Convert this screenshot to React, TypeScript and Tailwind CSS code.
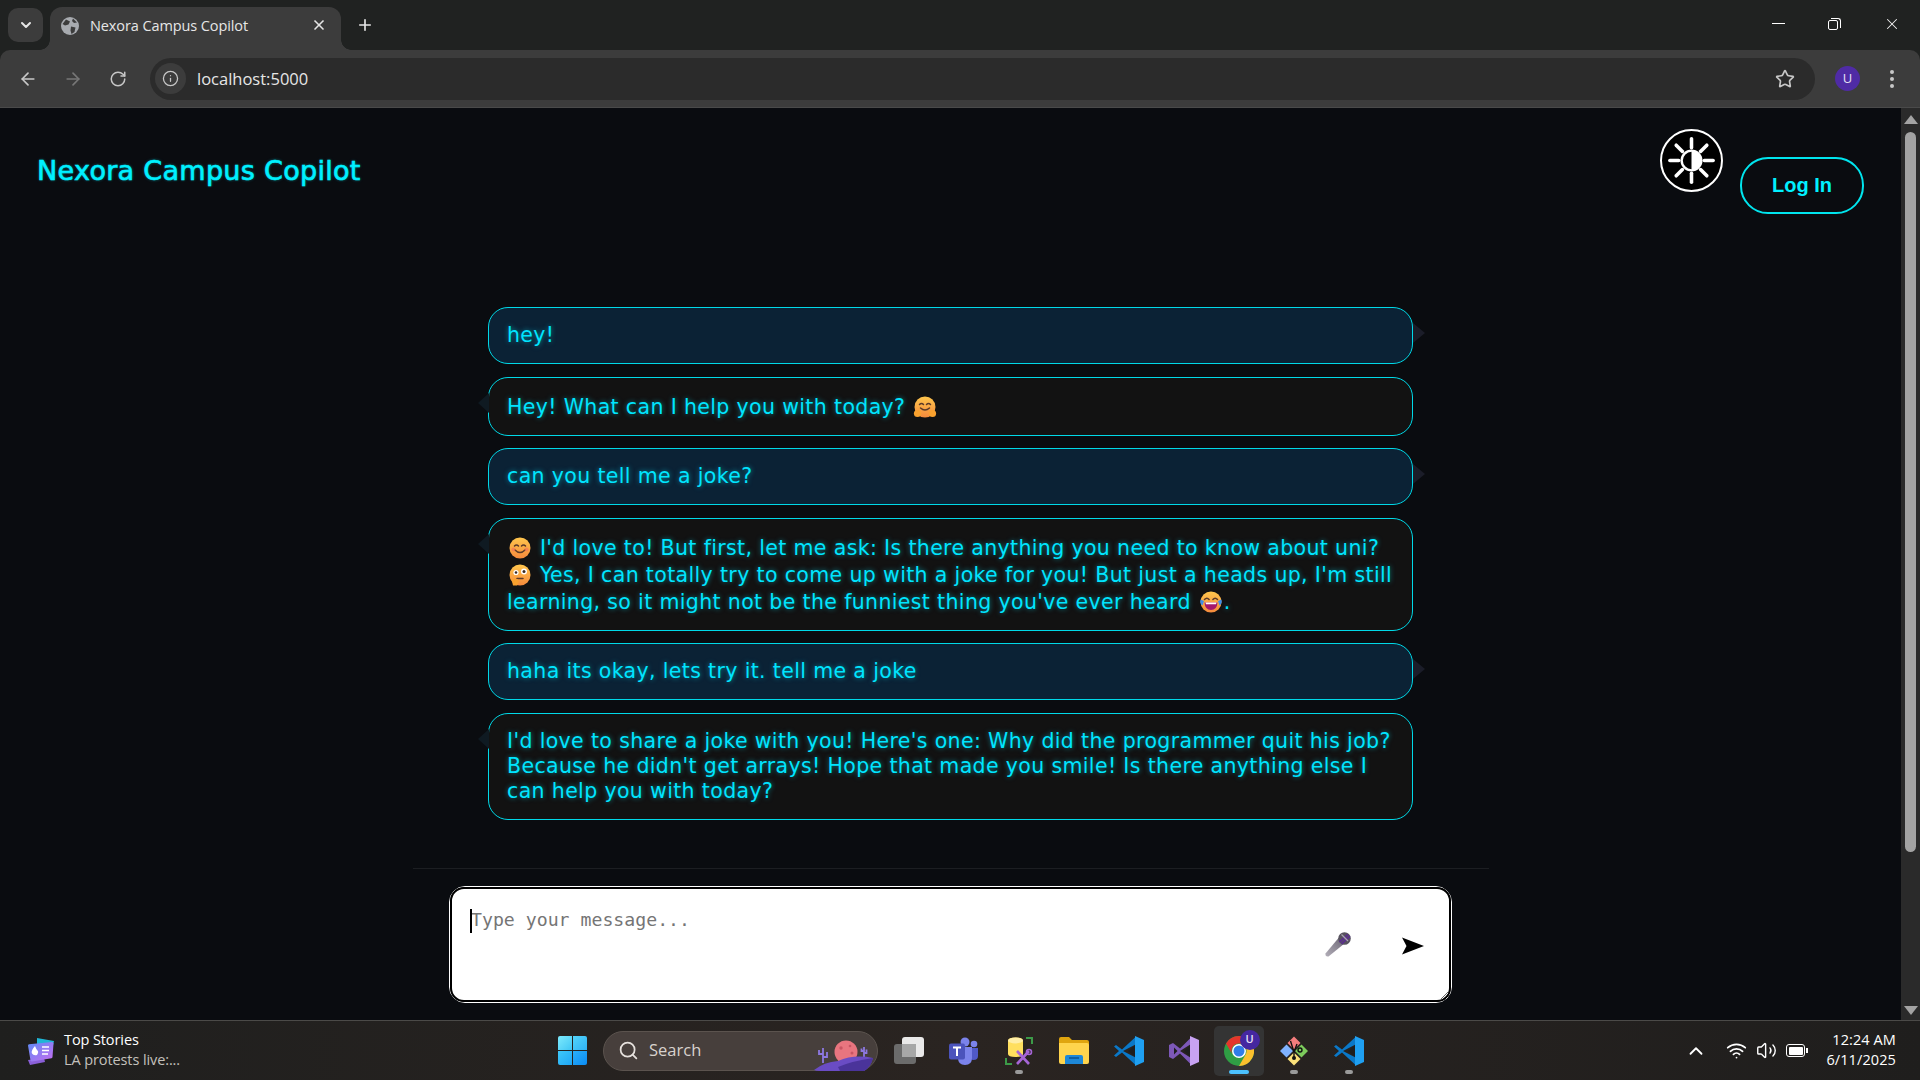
import { ArrowLeft, ArrowRight, ChevronDown, ChevronUp, Info, Plus, RotateCw, Search, Star, Volume2, Wifi, X } from 'lucide-react';

const chatFont = "font-['DejaVu_Sans',sans-serif] text-[20.5px] tracking-[0.36px] text-[#00e5ff] [text-shadow:0_0_5px_rgba(0,229,255,0.55)]";

function Tail({ side }: { side: 'left' | 'right' }) {
  if (side === 'left') {
    return <span className="absolute left-[-11px] top-[15px] h-0 w-0 border-y-[10px] border-r-[11px] border-y-transparent border-r-[#0f1a22]" />;
  }
  return <span className="absolute right-[-13px] top-[15px] h-0 w-0 border-y-[10px] border-l-[12px] border-y-transparent border-l-[#1b1d29]" />;
}

function Emoji({ kind }: { kind: 'hug' | 'smile' | 'think' | 'joy' }) {
  return (
    <svg viewBox="0 0 24 24" className="mx-[1px] inline-block h-[24px] w-[24px] align-[-5px]">
      <defs>
        <linearGradient id={`face-${kind}`} x1="0" y1="0" x2="0" y2="1">
          <stop offset="0" stopColor="#ffc64d" />
          <stop offset="1" stopColor="#f58a3c" />
        </linearGradient>
      </defs>
      <circle cx="12" cy="12" r="10.5" fill={`url(#face-${kind})`} />
      {kind === 'hug' && (
        <>
          <path d="M6.5 9.5q2-2.2 4 0M13.5 9.5q2-2.2 4 0" fill="none" stroke="#5b3a29" strokeWidth="1.5" strokeLinecap="round" />
          <path d="M7.5 13q4.5 4 9 0" fill="none" stroke="#5b3a29" strokeWidth="1.5" strokeLinecap="round" />
          <circle cx="4.5" cy="18.5" r="3.6" fill="#f9a12e" />
          <circle cx="19.5" cy="18.5" r="3.6" fill="#f9a12e" />
        </>
      )}
      {kind === 'smile' && (
        <>
          <path d="M6.5 10q2-2.2 4 0M13.5 10q2-2.2 4 0" fill="none" stroke="#5b3a29" strokeWidth="1.5" strokeLinecap="round" />
          <path d="M7 14q5 5 10 0" fill="none" stroke="#5b3a29" strokeWidth="1.6" strokeLinecap="round" />
          <circle cx="5.5" cy="13.5" r="2" fill="#f2705a" opacity=".6" />
          <circle cx="18.5" cy="13.5" r="2" fill="#f2705a" opacity=".6" />
        </>
      )}
      {kind === 'think' && (
        <>
          <circle cx="8" cy="9.5" r="2.6" fill="#fff" />
          <circle cx="16" cy="8.5" r="3" fill="#fff" />
          <circle cx="8" cy="9.5" r="1.3" fill="#3a2a22" />
          <circle cx="16" cy="8.5" r="1.5" fill="#3a2a22" />
          <path d="M9 15.5h6" stroke="#5b3a29" strokeWidth="1.5" strokeLinecap="round" />
          <path d="M3.5 16h6l1.5 2.5-2 4h-4z" fill="#f9a12e" />
        </>
      )}
      {kind === 'joy' && (
        <>
          <path d="M5.5 9.5q2.4-2.6 4.6 0M13.9 9.5q2.2-2.6 4.6 0" fill="none" stroke="#5b3a29" strokeWidth="1.5" strokeLinecap="round" />
          <path d="M5.5 12.5h13q-.5 7.5-6.5 7.5t-6.5-7.5z" fill="#a5186c" />
          <path d="M6.5 12.5h11l-.5 1.8H7z" fill="#fff" />
          <path d="M1.5 9.5l3.5 1.5-1.5 4.5q-3-2-2-6zM22.5 9.5L19 11l1.5 4.5q3-2 2-6z" fill="#3f8ee8" />
        </>
      )}
    </svg>
  );
}

function Bubble({ from, tall, children }: { from: 'user' | 'bot'; tall?: boolean; children: React.ReactNode }) {
  return (
    <div
      className={`relative rounded-[20px] border border-[#00d9e8] px-[18px] ${chatFont} ${tall ? 'pb-[14px] pt-[16px] leading-[27px]' : 'py-[15px] leading-[25px]'} ${
        from === 'user' ? 'bg-[#0b2235]' : 'bg-[#121212]'
      }`}
    >
      <Tail side={from === 'user' ? 'right' : 'left'} />
      {children}
    </div>
  );
}

function SunIcon() {
  const rays = [0, 45, 90, 135, 180, 225, 270, 315];
  return (
    <svg viewBox="-30 -30 60 60" className="h-full w-full">
      {rays.map((a) => (
        <line key={a} x1="13" y1="0" x2="22" y2="0" stroke="#fff" strokeWidth="3.6" strokeLinecap="round" transform={`rotate(${a})`} />
      ))}
      <circle r="10" fill="#000" stroke="#fff" strokeWidth="2.4" />
      <path d="M0-10.5a10.5 10.5 0 0 1 0 21z" fill="#fff" />
    </svg>
  );
}

function TabStrip() {
  return (
    <div className="flex h-[50px] shrink-0 items-end bg-[#202221] font-['Open_Sans',sans-serif] text-[#e6e6e6]">
      <div className="mb-[8px] ml-[8px] flex h-[34px] w-[35px] items-center justify-center rounded-[10px] bg-[#3c3c3c]">
        <ChevronDown size={16} strokeWidth={3} />
      </div>
      <div className="relative ml-[7px] flex h-[43px] w-[291px] items-center rounded-t-[12px] bg-[#3c3c3c] pb-[5px] pl-[11px]">
        <span className="absolute bottom-0 left-[-10px] h-[10px] w-[10px] bg-[radial-gradient(circle_at_0_0,transparent_9.5px,#3c3c3c_10px)]" />
        <span className="absolute bottom-0 right-[-10px] h-[10px] w-[10px] bg-[radial-gradient(circle_at_100%_0,transparent_9.5px,#3c3c3c_10px)]" />
        <svg viewBox="0 0 18 18" className="h-[18px] w-[18px]">
          <circle cx="9" cy="9" r="9" fill="#a8abb0" />
          <path d="M5 2.5l4 2-1.5 3L4 8.5 1.5 7zM10 9.5l4.5 1-1 4.5-3 2-1-3.5zM12 1.5l4 4-3 .5-2-2z" fill="#3c3c3c" />
        </svg>
        <span className="ml-[11px] whitespace-nowrap text-[14.5px] tracking-[-0.1px]">Nexora Campus Copilot</span>
        <X size={16} strokeWidth={2.5} className="absolute right-[14px] top-[10px]" />
      </div>
      <Plus size={18} strokeWidth={2.2} className="mb-[16px] ml-[15px]" />
      <div className="ml-auto flex h-full items-start text-[#f0f0f0]">
        <div className="mt-[23px] h-px w-[13px] bg-white" />
        <div className="relative ml-[43px] mt-[18px] h-[12px] w-[13px]">
          <span className="absolute bottom-0 left-0 h-[10px] w-[10px] rounded-[2px] border border-white bg-[#202221]" />
          <span className="absolute right-0 top-0 h-[10px] w-[10px] rounded-tr-[3px] border-r border-t border-white" />
        </div>
        <X size={18} strokeWidth={1.4} className="ml-[42px] mr-[19px] mt-[15px]" />
      </div>
    </div>
  );
}

function Toolbar() {
  return (
    <div className="flex h-[58px] shrink-0 items-center rounded-t-[10px] border-b border-[#4a4a4a] bg-[#3c3c3c] text-[#c7c7c7]">
      <ArrowLeft size={20} strokeWidth={2} className="ml-[18px]" />
      <ArrowRight size={20} strokeWidth={2} className="ml-[25px] text-[#777]" />
      <RotateCw size={18} strokeWidth={2} className="ml-[26px]" />
      <div className="ml-[23px] flex h-[42px] flex-1 items-center rounded-full bg-[#2b2b2b] pl-[5px]">
        <div className="flex h-[31px] w-[31px] items-center justify-center rounded-full bg-[#3c3c3c]">
          <Info size={17} strokeWidth={1.8} />
        </div>
        <span className="ml-[11px] pt-[1px] font-['Open_Sans',sans-serif] text-[16.5px] text-[#e6e6e6]">localhost:5000</span>
        <Star size={20} strokeWidth={2} className="ml-auto mr-[20px] text-[#c7c7c7]" />
      </div>
      <div className="ml-[20px] flex h-[25px] w-[25px] items-center justify-center rounded-full bg-[#4f2ba5] font-['Open_Sans',sans-serif] text-[13px] text-[#e6e0f5]">U</div>
      <div className="ml-[30px] mr-[26px] flex flex-col gap-[3px]">
        <span className="h-[4px] w-[4px] rounded-full bg-[#c7c7c7]" />
        <span className="h-[4px] w-[4px] rounded-full bg-[#c7c7c7]" />
        <span className="h-[4px] w-[4px] rounded-full bg-[#c7c7c7]" />
      </div>
    </div>
  );
}

function Scrollbar() {
  return (
    <div className="flex w-[19px] shrink-0 flex-col items-center bg-[#2a2a2a]">
      <svg viewBox="0 0 14 9" className="mt-[7px] h-[9px] w-[14px]">
        <path d="M7 0l7 9H0z" fill="#a3a3a3" />
      </svg>
      <div className="mt-[8px] h-[720px] w-[11px] rounded-full bg-[#a3a3a3]" />
      <svg viewBox="0 0 14 9" className="mb-[5px] mt-auto h-[9px] w-[14px]">
        <path d="M7 9L0 0h14z" fill="#a3a3a3" />
      </svg>
    </div>
  );
}

function Mic() {
  return (
    <svg viewBox="0 0 26 25" className="h-[25px] w-[26px]">
      <defs>
        <linearGradient id="mic-handle" x1="0" y1="1" x2="1" y2="0">
          <stop offset="0" stopColor="#b3afb9" />
          <stop offset="1" stopColor="#6c6675" />
        </linearGradient>
      </defs>
      <path d="M0.5 21.5L13.5 6l6 5.5L3.5 24.5q-3.5 .5-3-3z" fill="url(#mic-handle)" />
      <circle cx="19.5" cy="6.5" r="6.3" fill="#57525e" />
      <path d="M14.5 10L23 2.5M16.5 11.7L25 4.3" stroke="#5a2f8c" strokeWidth="1.8" />
      <path d="M16.5 2.5l6.5 6.5" stroke="#a9a4b0" strokeWidth="1.2" />
    </svg>
  );
}

function ChatInput() {
  return (
    <div className="relative mx-auto h-[117px] w-[1003px] rounded-[16px] border-[1.5px] border-white">
      <textarea
        placeholder="Type your message..."
        className="block h-full w-full rounded-[14px] border-[2.5px] border-black bg-white pl-[19px] pt-[19px] font-['DejaVu_Sans_Mono',monospace] text-[18.2px] leading-[24px] outline-none placeholder:text-[#757575]"
      />
      <span className="absolute left-[20px] top-[22px] h-[24px] w-[2px] bg-black" />
      <div className="absolute left-[875px] top-[45px]">
        <Mic />
      </div>
      <svg viewBox="0 0 22 17" className="absolute left-[952px] top-[50px] h-[18px] w-[22px]">
        <path d="M0 0l22 8.5L0 17l4.5-8.5z" fill="#000" />
      </svg>
    </div>
  );
}

function NewsIcon() {
  return (
    <svg viewBox="0 0 30 30" className="h-[30px] w-[30px]">
      <defs>
        <linearGradient id="news" x1="0" y1="0" x2="1" y2="1">
          <stop offset="0" stopColor="#5e8cf5" />
          <stop offset="1" stopColor="#c66cf0" />
        </linearGradient>
      </defs>
      <path d="M12 2l17 3-2 9-15-3z" fill="#1fb6d6" />
      <path d="M3 24l2 5 15-3-1-4z" fill="#8a5fd8" />
      <path d="M3 9.5q0-1 1-1.2L27 6q1.5 0 1.5 1.5L27.5 21q0 1-1 1.2L7 25.5q-1.2 0-1.5-1z" fill="url(#news)" />
      <path d="M10 10q1 3 2.5 4.5t-.5 4.5q-3.5 1-5-1.5t3-7.5z" fill="#fff" />
      <path d="M17 11h7M17 14.5h7M17 18h6" stroke="#fff" strokeWidth="1.5" />
    </svg>
  );
}

function WinLogo() {
  return (
    <div className="grid h-[29px] w-[29px] grid-cols-2 gap-[1.5px]">
      <span className="rounded-tl-[2px] bg-gradient-to-br from-[#7ceafc] to-[#3ec6f5]" />
      <span className="rounded-tr-[2px] bg-gradient-to-br from-[#52d4fa] to-[#2fb2f5]" />
      <span className="rounded-bl-[2px] bg-gradient-to-br from-[#3ec8f8] to-[#1ea6f5]" />
      <span className="rounded-br-[2px] bg-gradient-to-br from-[#2aaff8] to-[#0a8cf5]" />
    </div>
  );
}

function SearchArt() {
  return (
    <svg viewBox="0 0 60 32" className="absolute bottom-[-2px] right-[3px] h-[32px] w-[60px]">
      <circle cx="32" cy="12" r="11.5" fill="#e8757f" />
      <circle cx="27" cy="8" r="1.7" fill="#c85563" />
      <circle cx="36" cy="6" r="1.3" fill="#c85563" />
      <circle cx="38" cy="13" r="1.5" fill="#c85563" />
      <path d="M9 8v15M9 14H5v-4M9 17h4v-5M50 7v11M50 11h-2.5V8.5M50 13h2.5V9.5" stroke="#8d78e0" strokeWidth="1.8" fill="none" />
      <path d="M0 30q10-8 24-9 16-7 35-3-3 10-9 13H6q-4 0-6-1z" fill="#6a4cc4" />
      <path d="M24 27q14-6 35-9-2 9-9 13H26z" fill="#4a349a" />
    </svg>
  );
}

function TaskView() {
  return (
    <div className="relative h-[27px] w-[30px]">
      <span className="absolute bottom-0 left-0 h-[20px] w-[22px] rounded-[3px] bg-[#6b6b6b]" />
      <span className="absolute right-0 top-0 h-[20px] w-[22px] rounded-[3px] bg-white opacity-90" />
      <span className="absolute bottom-[7px] left-[8px] h-[13px] w-[14px] bg-[#a7a7a7]" />
    </div>
  );
}

function Teams() {
  return (
    <svg viewBox="0 0 30 28" className="h-[28px] w-[30px]">
      <circle cx="25" cy="7" r="3.3" fill="#7b83eb" />
      <path d="M20 11h9v8q0 4-4.5 4T20 19z" fill="#5059c9" />
      <circle cx="16" cy="5" r="4.5" fill="#7b83eb" />
      <path d="M9 10h14v11q0 7-7 7t-7-7z" fill="#7b83eb" />
      <rect x="0" y="6.5" width="16" height="16" rx="2" fill="#4b53bc" />
      <path d="M4 10.5h8M8 10.5v8.5" stroke="#fff" strokeWidth="2" />
    </svg>
  );
}

function DbTool() {
  return (
    <svg viewBox="0 0 28 28" className="h-[28px] w-[28px]">
      <path d="M3 3.5q0-3 7.5-3t7.5 3V17q0 3-7.5 3T3 17z" fill="#ffdf5e" />
      <ellipse cx="10.5" cy="3.5" rx="7.5" ry="3" fill="#ffeea6" />
      <path d="M21 1h6v6M1 21v6h6" fill="none" stroke="#3c9a48" strokeWidth="2" />
      <path d="M12 14l12 13M24 14L12 27" stroke="#a665d6" strokeWidth="2.6" />
      <circle cx="24" cy="15" r="2.5" fill="none" stroke="#a665d6" strokeWidth="1.6" />
    </svg>
  );
}

function Folder() {
  return (
    <svg viewBox="0 0 30 27" className="h-[27px] w-[30px]">
      <path d="M0 2q0-2 2-2h8l3 3h15q2 0 2 2v3H0z" fill="#e0a50f" />
      <path d="M0 6h28q2 0 2 2v17q0 2-2 2H2q-2 0-2-2z" fill="#ffd44d" />
      <path d="M6 27v-7q0-2 2-2h14q2 0 2 2v7z" fill="#1e88d8" />
      <path d="M10 21h10" stroke="#0a4f8f" strokeWidth="1.4" />
    </svg>
  );
}

function VsCode() {
  return (
    <svg viewBox="0 0 30 30" className="h-[30px] w-[30px]">
      <path d="M0 10.5l2-1.5 6 4.5L21 1.5 22.5 8 9 15 22.5 22 21 28.5 8 16.5 2 21 0 19.5 5 15z" fill="#0a78c8" />
      <path d="M21 0l9 4v22l-9 4z" fill="#1fa0f2" />
      <path d="M21 9.5L14 15l7 5.5z" fill="#1e1e1e" />
    </svg>
  );
}

function VisualStudio() {
  return (
    <svg viewBox="0 0 30 30" className="h-[30px] w-[30px]">
      <path d="M0 9l4-2 7 5.5L22 1.5 22 8 11 15l11 7v6.5L11 17.5 4 23l-4-2 0-12z" fill="#7d58b8" />
      <path d="M5 11.5L8.5 15 5 18.5z" fill="#1e1e1e" />
      <path d="M21 0l9 4v22l-9 4z" fill="#c8a2f2" />
      <path d="M21 9.5L15 15l6 5.5z" fill="#1e1e1e" />
    </svg>
  );
}

function Chrome() {
  return (
    <svg viewBox="0 0 30 30" className="h-[30px] w-[30px]">
      <circle cx="15" cy="15" r="15" fill="#2f9e44" />
      <path d="M15 0a15 15 0 0 1 13 7.5H15a7.5 7.5 0 0 0-6.5 11.25L2 7.5A15 15 0 0 1 15 0z" fill="#e5352b" />
      <path d="M28 7.5A15 15 0 0 1 15 30l6.5-11.25A7.5 7.5 0 0 0 15 7.5z" fill="#fbc02d" />
      <circle cx="15" cy="15" r="7" fill="#fff" />
      <circle cx="15" cy="15" r="5.5" fill="#2f7de8" />
    </svg>
  );
}

function GitTool() {
  return (
    <svg viewBox="0 0 30 30" className="h-[30px] w-[30px]">
      <path d="M15 0.5l6.5 6.5L15 13.5 8.5 7z" fill="#f47d7d" />
      <path d="M7.5 8.5L14 15l-6.5 6.5L1 15z" fill="#7fb2ff" />
      <path d="M22.5 8.5L29 15l-6.5 6.5L16 15z" fill="#7dcc5c" />
      <path d="M15 16.5l6.5 6.5L15 29.5 8.5 23z" fill="#fbe07a" />
      <path d="M11.5 5l3.5 11v7M18 8l-3 8" stroke="#111" strokeWidth="1.4" fill="none" />
      <circle cx="15" cy="22" r="2" fill="#111" />
      <circle cx="21" cy="14" r="2" fill="none" stroke="#111" strokeWidth="1.4" />
    </svg>
  );
}

function AppSlot({ dot, active, children }: { dot?: boolean; active?: boolean; children: React.ReactNode }) {
  return (
    <div className="relative flex h-[50px] w-[55px] items-center justify-center">
      {active && <span className="absolute inset-y-0 left-[2.5px] w-[50px] rounded-[5px] bg-[#343434]" />}
      <div className="relative flex items-center">{children}</div>
      {dot && <span className="absolute bottom-[2px] h-[4px] w-[8px] rounded-full bg-[#9a9a9a]" />}
      {active && <span className="absolute bottom-[2px] h-[4px] w-[20px] rounded-full bg-[#4cc2ff]" />}
    </div>
  );
}

function Taskbar() {
  return (
    <div className="flex h-[60px] shrink-0 items-center border-t border-[#4b4a48] bg-gradient-to-r from-[#1f1f1e] via-[#2a2421] to-[#1f1e1d] font-['Open_Sans',sans-serif]">
      <div className="flex w-[558px] items-center pl-[25px]">
        <NewsIcon />
        <div className="mb-[2px] ml-[9px] text-[14.5px] leading-[20px] tracking-[-0.1px]">
          <div className="text-white">Top Stories</div>
          <div className="text-[#c4c0bc]">LA protests live:...</div>
        </div>
      </div>
      <WinLogo />
      <div className="relative ml-[16px] flex h-[40px] w-[275px] items-center rounded-full border border-[#5b534e] bg-[#473f3c] pl-[14px]">
        <Search size={21} strokeWidth={2} className="text-[#e6e1dd]" />
        <span className="ml-[10px] text-[16.5px] text-[#d8d2cd]">Search</span>
        <SearchArt />
      </div>
      <div className="ml-[3px] flex">
        <AppSlot><TaskView /></AppSlot>
        <AppSlot><Teams /></AppSlot>
        <AppSlot dot><DbTool /></AppSlot>
        <AppSlot><Folder /></AppSlot>
        <AppSlot><VsCode /></AppSlot>
        <AppSlot><VisualStudio /></AppSlot>
        <AppSlot active>
          <Chrome />
          <span className="absolute right-[-6px] top-[-6px] flex h-[20px] w-[20px] items-center justify-center rounded-full bg-[#4527a0] text-[11px] font-semibold text-[#e6e0f5]">U</span>
        </AppSlot>
        <AppSlot dot><GitTool /></AppSlot>
        <AppSlot dot><VsCode /></AppSlot>
      </div>
      <div className="ml-auto flex items-center pr-[24px] text-white">
        <ChevronUp size={22} strokeWidth={2} />
        <Wifi size={21} strokeWidth={2} className="ml-[19px]" />
        <Volume2 size={21} strokeWidth={1.6} className="ml-[9px]" />
        <div className="relative ml-[9px] h-[13px] w-[19px] rounded-[3px] border-[1.5px] border-white p-[1.5px]">
          <div className="h-full w-full rounded-[1px] bg-white" />
          <span className="absolute right-[-3.5px] top-[2.5px] h-[5px] w-[2px] bg-white" />
        </div>
        <div className="mb-[2px] ml-[21px] text-right text-[14.5px] leading-[20px] tracking-[0.1px]">
          <div>12:24 AM</div>
          <div>6/11/2025</div>
        </div>
      </div>
    </div>
  );
}

export default function App() {
  return (
    <div className="flex h-[1080px] w-[1920px] flex-col overflow-hidden bg-[#202221]">
      <TabStrip />
      <Toolbar />
      <div className="flex min-h-0 flex-1">
        <main className="flex min-w-0 flex-1 flex-col bg-[#0a0c10]">
          <header className="flex h-[199px] shrink-0 items-start pl-[37px] pr-[37px]">
            <h1 className="mt-[46px] font-['DejaVu_Sans',sans-serif] text-[27px] font-normal leading-[33px] tracking-[0.3px] text-[#00f0ff] [-webkit-text-stroke:0.6px_#00f0ff] [text-shadow:0_0_3px_rgba(0,240,255,0.5)]">
              Nexora Campus Copilot
            </h1>
            <button className="ml-auto mt-[21px] h-[63px] w-[63px] rounded-full border-2 border-white bg-black">
              <SunIcon />
            </button>
            <button className="ml-[17px] mt-[49px] h-[57px] w-[124px] rounded-[28px] border-2 border-[#00e5ee] pb-[2px] font-['Liberation_Sans',sans-serif] text-[20px] font-bold text-[#00f0ff]">
              Log In
            </button>
          </header>

          <div className="mx-auto flex w-[925px] shrink-0 flex-col gap-[12.5px]">
            <Bubble from="user">hey!</Bubble>
            <Bubble from="bot" tall>
              Hey! What can I help you with today? <Emoji kind="hug" />
            </Bubble>
            <Bubble from="user">can you tell me a joke?</Bubble>
            <Bubble from="bot" tall>
              <Emoji kind="smile" /> I'd love to! But first, let me ask: Is there anything you need to know about uni?
              <br />
              <Emoji kind="think" /> Yes, I can totally try to come up with a joke for you! But just a heads up, I'm still
              <br />
              learning, so it might not be the funniest thing you've ever heard <Emoji kind="joy" />.
            </Bubble>
            <Bubble from="user">haha its okay, lets try it. tell me a joke</Bubble>
            <Bubble from="bot">
              I'd love to share a joke with you! Here's one: Why did the programmer quit his job?
              <br />
              Because he didn't get arrays! Hope that made you smile! Is there anything else I
              <br />
              can help you with today?
            </Bubble>
          </div>

          <div className="mx-auto mt-[48px] h-px w-[1076px] shrink-0 bg-[#1c1e22]" />
          <div className="mt-[17px]">
            <ChatInput />
          </div>
        </main>
        <Scrollbar />
      </div>
      <Taskbar />
    </div>
  );
}
